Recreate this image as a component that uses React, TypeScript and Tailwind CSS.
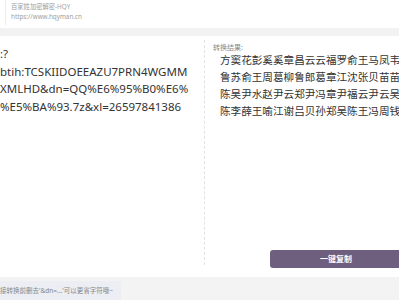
const font = { fontFamily: '"Noto Sans", "Noto Sans CJK SC", sans-serif' };

export default function App() {
  return (
    <div className="w-[399px] h-[300px] overflow-hidden bg-white flex flex-col" style={font}>
      {/* header */}
      <div className="h-[28px] pl-[5px]">
        <div className="h-[25px] border-l border-[#ececec] pl-[5px] pt-[2px] text-[6.3px] leading-[10px] text-[#a0a0a0]">
          <p>百家姓加密解密-HQY</p>
          <p>https://www.hqyman.cn</p>
        </div>
      </div>
      <div className="h-[8px] bg-[#f2f2f2]" />

      {/* main */}
      <div className="h-[241px] flex">
        <div className="w-[204px] shrink-0 pt-[9px] text-[11.5px] leading-[17.5px] text-[#333] whitespace-nowrap">
          <p>:?</p>
          <p>btih:TCSKIIDOEEAZU7PRN4WGMM</p>
          <p>XMLHD&amp;dn=QQ%E6%95%B0%E6%</p>
          <p>%E5%BA%93.7z&amp;xl=26597841386</p>
        </div>
        <div className="w-[195px] shrink-0 pt-[4px]">
          <div className="h-[225px] border-l border-dashed border-[#e2e2e2] pl-[8px] pt-[3px] flex flex-col">
            <p className="text-[7px] leading-[9px] text-[#888]">转换结果:</p>
            <div className="pl-[7px] text-[10.6px] leading-[17px] text-[#333] whitespace-nowrap">
              <p>方窦花彭奚奚章昌云云福罗俞王马凤韦</p>
              <p>鲁苏俞王周葛柳鲁郎葛章江沈张贝苗苗</p>
              <p>陈吴尹水赵尹云郑尹冯章尹福云尹云吴</p>
              <p>陈李薛王喻江谢吕贝孙郑吴陈王冯周钱</p>
            </div>
            <button className="mt-auto -mb-[3px] ml-[57px] w-[132px] h-[18px] shrink-0 rounded-[3px] bg-[#6f5f7e] flex items-center justify-center text-[8px] font-bold text-white">
              一键复制
            </button>
          </div>
        </div>
      </div>

      {/* footer */}
      <div className="flex-1 bg-[#f3f3f3] pt-[4px]">
        <div className="w-[121px] h-full bg-[#eceef3] overflow-hidden whitespace-nowrap text-[6.5px] leading-[19px] text-[#888]">
          接转换前删去'&amp;dn=...'可以更省字符哦~
        </div>
      </div>
    </div>
  );
}
